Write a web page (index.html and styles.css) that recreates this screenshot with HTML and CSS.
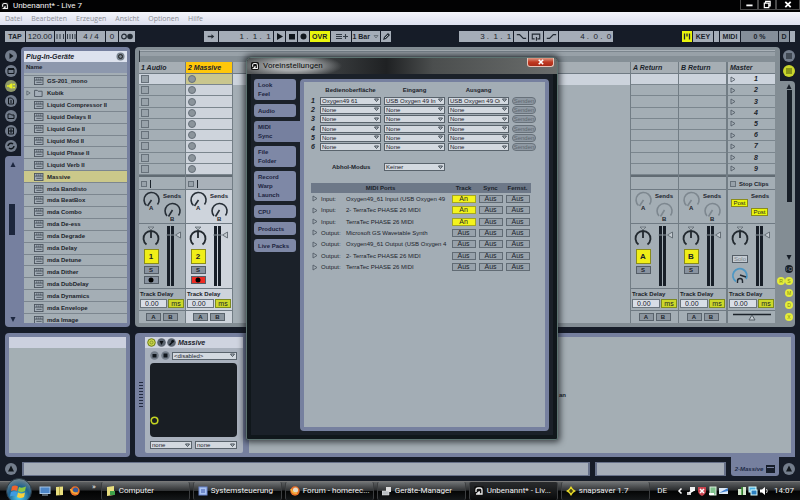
FILE: index.html
```html
<!DOCTYPE html>
<html lang="de">
<head>
<meta charset="utf-8">
<title>Unbenannt* - Live 7</title>
<link rel="stylesheet" href="styles.css">
</head>
<body>
<svg class="defs" aria-hidden="true">
  <symbol id="live" viewBox="0 0 10 10"><rect width="10" height="10" rx="2" fill="#111"/><path d="M2 6V4Q2 2 4 2h2q2 0 2 2v4H5V6h1M2 8h2V6" fill="none" stroke="#eee" stroke-width="1.3"/></symbol>
  <symbol id="plug" viewBox="0 0 11 9"><rect x=".5" y=".5" width="9.5" height="8" fill="#a4aeb8" stroke="#4b545e"/><path d="M1 3.5h9M3 3.5v-2M5.3 3.5v-2M7.5 3.5v-2M2.5 6h6" stroke="#4b545e" fill="none"/></symbol>
  <symbol id="folder" viewBox="0 0 11 9"><path d="M.5 1.5h3l1 1H9v6H.5z" fill="#a4aeb8" stroke="#4b545e"/></symbol>
  <symbol id="tri" viewBox="0 0 6 7"><path d="M1 1l4 2.5L1 6z" fill="none" stroke="#555f69" stroke-width=".9"/></symbol>
  <symbol id="sends" viewBox="0 0 46 33">
    <g fill="none" stroke="currentColor" stroke-width="1.6">
      <path d="M7.5 15.5A7.5 7.5 0 1 1 18.5 14.5M12.5 10L8.5 16"/>
      <path d="M28 26A7.5 7.5 0 1 1 39.500 25.500M33.500 20L29.500 26.500"/>
    </g>
  </symbol>
  <symbol id="pan" viewBox="0 0 18 22"><path d="M4.500 18.500A7.500 7.500 0 1 1 13.500 18.500M9 12V4.500" fill="none" stroke="#22292f" stroke-width="1.800"/><path d="M6 1h6L9 4z" fill="#aab3b8" stroke="#59636b" stroke-width=".7"/></symbol>
  <symbol id="meter" viewBox="0 0 16 60"><path d="M1 0h3v60H1zM5 0h3v60H5z" fill="#171e27"/><path d="M0 9h9" stroke="#8a949c"/><path d="M9.500 9l5-3v6z" fill="#c3cad0" stroke="#535d65" stroke-width=".8"/></symbol>
</svg>

<header class="titlebar">
  <svg class="ico8"><use href="#live"/></svg><span>Unbenannt* - Live 7</span>
  <div class="winbtns">
    <button aria-label="Minimieren"><svg viewBox="0 0 18 10"><path d="M6 6h7" stroke="#fff" stroke-width="2"/></svg></button>
    <button aria-label="Wiederherstellen"><svg viewBox="0 0 14 10"><path d="M5.500 3V1.500h5v5H9M4 3.500h5v5H4z" fill="none" stroke="#fff" stroke-width="1.300"/></svg></button>
    <button aria-label="Schließen" class="wide"><svg viewBox="0 0 24 10"><path d="M9 2l6 6M15 2L9 8" stroke="#fff" stroke-width="2"/></svg></button>
  </div>
</header>
<nav class="menubar"><a href="#">Datei</a><a href="#">Bearbeiten</a><a href="#">Erzeugen</a><a href="#">Ansicht</a><a href="#">Optionen</a><a href="#">Hilfe</a></nav>

<main class="live">
  <div class="transport">
    <div class="group">
      <button class="w20">TAP</button><button class="w27 num">120.00</button>
      <button class="w10" aria-label="Langsamer"><svg viewBox="0 0 10 11"><path d="M2 3v5M5 3v5M8.500 3v5" stroke="#333c46"/></svg></button>
      <button class="w10" aria-label="Schneller"><svg viewBox="0 0 10 11"><path d="M1.500 3v5M4 3v5M6.500 3v5M9 3v5" stroke="#333c46"/></svg></button>
      <button class="w27 num">4 / 4</button><button class="w12 num">0</button>
      <button class="w16" aria-label="Metronom"><svg viewBox="0 0 16 11"><circle cx="5" cy="5.500" r="2.300" fill="none" stroke="#222a33" stroke-width="1.200"/><circle cx="11" cy="5.500" r="2.800" fill="#222a33"/></svg></button>
    </div>
    <div class="group">
      <button class="w15" aria-label="Folgen"><svg viewBox="0 0 15 11"><path d="M4 5.500h5" stroke="#222a33" stroke-width="1.500"/><path d="M8 3l3 2.500L8 8z" fill="#222a33"/></svg></button>
      <button class="w54 num right">1 .&nbsp; 1 .&nbsp; 1</button>
      <button class="w11" aria-label="Start"><svg viewBox="0 0 11 11"><path d="M3 2l6 3.500L3 9z" fill="#10161c"/></svg></button>
      <button class="w11" aria-label="Stopp"><svg viewBox="0 0 11 11"><path d="M3 3h6v5.500H3z" fill="#10161c"/></svg></button>
      <button class="w11" aria-label="Aufnahme"><svg viewBox="0 0 11 11"><circle cx="5.500" cy="5.500" r="3" fill="#10161c"/></svg></button>
      <button class="w20 on">OVR</button>
      <button class="w20" aria-label="Arrangement"><svg viewBox="0 0 20 11"><path d="M5 3.500h6M5 5.500h6M5 7.500h6M12 5.500h5M14.500 3v5" stroke="#333c46" stroke-width="1.100"/></svg></button>
      <button class="w27">1 Bar <svg viewBox="0 0 6 5" class="caret"><path d="M1 1.500h4L3 4z" fill="none" stroke="#6b747d"/></svg></button>
      <button class="w10" aria-label="Stift"><svg viewBox="0 0 10 11"><path d="M2 9l1-3 4-4 2 2-4 4z" fill="#222a33"/><path d="M4 7l3-3" stroke="#aab3bd"/></svg></button>
    </div>
    <div class="group">
      <button class="w54 num right">3 .&nbsp; 1 .&nbsp; 1</button>
      <button class="w15" aria-label="Punch-In"><svg viewBox="0 0 15 11"><path d="M3 3.500h3l4 4h3" fill="none" stroke="#222a33" stroke-width="1.300"/></svg></button>
      <button class="w15" aria-label="Loop"><svg viewBox="0 0 15 11"><path d="M6 8H3.500V3h8v5H9M8 6v4" fill="none" stroke="#222a33" stroke-width="1.200"/></svg></button>
      <button class="w15" aria-label="Punch-Out"><svg viewBox="0 0 15 11"><path d="M3 7.500h3l4-4h3" fill="none" stroke="#222a33" stroke-width="1.300"/></svg></button>
      <button class="w54 num right">4 .&nbsp; 0 .&nbsp; 0</button>
    </div>
    <div class="group">
      <button class="w10 on" aria-label="Tastatur"><svg viewBox="0 0 10 11"><path d="M2.500 2.500v6M5 2.500v3M7.500 2.500v6" stroke="#222a33" stroke-width="1.300"/></svg></button>
      <button class="w20">KEY</button><button class="w5" aria-label="Key-Anzeige"></button><button class="w20">MIDI</button><button class="w37 load">0 %</button><button class="w10 load">D</button><button class="w5" aria-label="MIDI-Anzeige"></button>
    </div>
  </div>

  <div class="upper">
    <aside class="browser">
      <div class="rail">
        <button aria-label="Live-Geräte"><svg viewBox="0 0 12 12"><path d="M4.500 3l4 3-4 3z" fill="#10161c"/></svg></button>
        <button aria-label="Bibliothek"><svg viewBox="0 0 12 12"><path d="M3 4h6v4.500H3z" fill="none" stroke="#10161c"/><path d="M3 4h6" stroke="#10161c" stroke-width="2"/></svg></button>
        <button class="lit" aria-label="Plug-ins"><svg viewBox="0 0 12 12"><path d="M2 6h3M8 4.500h2M8 7.500h2" stroke="#e8f020" stroke-width="1.300"/><path d="M7.500 3.500v5H6Q4 8 4 6t2-2.500z" fill="#e8f020"/></svg></button>
        <button aria-label="Datei 1"><svg viewBox="0 0 12 12"><path d="M3.500 3h3l2 2v4h-5zM6 5v3" fill="none" stroke="#10161c"/></svg></button>
        <button aria-label="Datei 2"><svg viewBox="0 0 12 12"><path d="M3 4h2.500l1 1H9v3.500H3z" fill="none" stroke="#10161c"/></svg></button>
        <button aria-label="Datei 3"><svg viewBox="0 0 12 12"><path d="M3.500 3h5v6h-5zM5 5h2v2H5z" fill="none" stroke="#10161c"/></svg></button>
        <button aria-label="Hot-Swap"><svg viewBox="0 0 12 12"><path d="M3 6a3 3 0 0 1 5-2M9 6a3 3 0 0 1-5 2" fill="none" stroke="#10161c" stroke-width="1.500"/></svg></button>
        <div class="scroller"><svg viewBox="0 0 8 7"><path d="M4 1l2.500 5h-5z" fill="#1d2740"/></svg><i></i><svg viewBox="0 0 8 7"><path d="M4 6L1.500 1h5z" fill="#1d2740"/></svg></div>
      </div>
      <div class="browser-box">
        <div class="browser-head"><span>Plug-In-Geräte</span><svg class="ico9" viewBox="0 0 9 9"><circle cx="4.500" cy="4.500" r="4" fill="#76808c"/><circle cx="4.500" cy="4.500" r="2" fill="none" stroke="#222"/></svg></div>
        <div class="browser-name">Name</div>
        <div class="list-clip"><ul class="list">
          <li></li>
          <li><i></i><svg><use href="#plug"/></svg>GS-201_mono</li>
          <li><i><svg class="t"><use href="#tri"/></svg></i><svg><use href="#folder"/></svg>Kubik</li>
          <li><i></i><svg><use href="#plug"/></svg>Liquid Compressor II</li>
          <li><i></i><svg><use href="#plug"/></svg>Liquid Delays II</li>
          <li><i></i><svg><use href="#plug"/></svg>Liquid Gate II</li>
          <li><i></i><svg><use href="#plug"/></svg>Liquid Mod II</li>
          <li><i></i><svg><use href="#plug"/></svg>Liquid Phase II</li>
          <li><i></i><svg><use href="#plug"/></svg>Liquid Verb II</li>
          <li class="sel"><i></i><svg><use href="#plug"/></svg>Massive</li>
          <li><i></i><svg><use href="#plug"/></svg>mda Bandisto</li>
          <li><i></i><svg><use href="#plug"/></svg>mda BeatBox</li>
          <li><i></i><svg><use href="#plug"/></svg>mda Combo</li>
          <li><i></i><svg><use href="#plug"/></svg>mda De-ess</li>
          <li><i></i><svg><use href="#plug"/></svg>mda Degrade</li>
          <li><i></i><svg><use href="#plug"/></svg>mda Delay</li>
          <li><i></i><svg><use href="#plug"/></svg>mda Detune</li>
          <li><i></i><svg><use href="#plug"/></svg>mda Dither</li>
          <li><i></i><svg><use href="#plug"/></svg>mda DubDelay</li>
          <li><i></i><svg><use href="#plug"/></svg>mda Dynamics</li>
          <li><i></i><svg><use href="#plug"/></svg>mda Envelope</li>
          <li><i></i><svg><use href="#plug"/></svg>mda Image</li>
        </ul></div>
      </div>
    </aside>

    <section class="session">
      <div class="tracks-wrap">
        <div class="scrub"></div>
        <div class="tracks">
          <div class="track">
            <h3>1 Audio</h3>
            <div class="clips slots"><i></i><i></i><i></i><i></i><i></i><i></i><i></i><i></i><i></i></div>
            <div class="stop"><b></b><s></s></div>
            <svg class="sends"><use href="#sends"/><text x="10" y="20">A</text><text x="31" y="31">B</text><text x="24" y="8">Sends</text></svg>
            <div class="mixer"><div class="col"><svg class="pan"><use href="#pan"/></svg><button class="act">1</button><button class="sm">S</button><button class="sm" aria-label="Aufnahme 1"><svg viewBox="0 0 6 6"><circle cx="3" cy="3" r="2.500"/></svg></button></div><svg class="meter"><use href="#meter"/></svg></div>
            <div class="delay"><label for="d1">Track Delay</label><div><input id="d1" value="0.00"><button>ms</button></div></div>
            <div class="ab"><button>A</button><button>B</button></div>
          </div>
          <div class="track active">
            <h3>2 Massive</h3>
            <div class="clips slots circles"><i></i><i></i><i></i><i></i><i></i><i></i><i></i><i></i><i></i></div>
            <div class="stop"><b></b><s></s></div>
            <svg class="sends"><use href="#sends"/><text x="10" y="20">A</text><text x="31" y="31">B</text><text x="24" y="8">Sends</text></svg>
            <div class="mixer"><div class="col"><svg class="pan"><use href="#pan"/></svg><button class="act">2</button><button class="sm">S</button><button class="sm armed" aria-label="Aufnahme 2"><svg viewBox="0 0 6 6"><circle cx="3" cy="3" r="2.500"/></svg></button></div><svg class="meter"><use href="#meter"/></svg></div>
            <div class="delay"><label for="d2">Track Delay</label><div><input id="d2" value="0.00"><button>ms</button></div></div>
            <div class="ab"><button>A</button><button>B</button></div>
          </div>
          <div class="empty"><h3></h3><div class="hl"></div></div>
          <div class="track ret">
            <h3>A Return</h3>
            <div class="clips"><i></i><i></i><i></i><i></i><i></i><i></i><i></i><i></i><i></i></div>
            <div class="stop"></div>
            <svg class="sends"><use href="#sends"/><text x="10" y="20">A</text><text x="31" y="31">B</text><text x="24" y="8">Sends</text></svg>
            <div class="mixer"><div class="col"><svg class="pan"><use href="#pan"/></svg><button class="act">A</button><button class="sm">S</button></div><svg class="meter"><use href="#meter"/></svg></div>
            <div class="delay"><label for="d3">Track Delay</label><div><input id="d3" value="0.00"><button>ms</button></div></div>
            <div class="ab"><button>A</button><button>B</button></div>
          </div>
          <div class="track ret">
            <h3>B Return</h3>
            <div class="clips"><i></i><i></i><i></i><i></i><i></i><i></i><i></i><i></i><i></i></div>
            <div class="stop"></div>
            <svg class="sends"><use href="#sends"/><text x="10" y="20">A</text><text x="31" y="31">B</text><text x="24" y="8">Sends</text></svg>
            <div class="mixer"><div class="col"><svg class="pan"><use href="#pan"/></svg><button class="act">B</button><button class="sm">S</button></div><svg class="meter"><use href="#meter"/></svg></div>
            <div class="delay"><label for="d4">Track Delay</label><div><input id="d4" value="0.00"><button>ms</button></div></div>
            <div class="ab"><button>A</button><button>B</button></div>
          </div>
          <div class="track master">
            <h3>Master</h3>
            <div class="clips scenes"><span><svg><use href="#tri"/></svg>1</span><span><svg><use href="#tri"/></svg>2</span><span><svg><use href="#tri"/></svg>3</span><span><svg><use href="#tri"/></svg>4</span><span><svg><use href="#tri"/></svg>5</span><span><svg><use href="#tri"/></svg>6</span><span><svg><use href="#tri"/></svg>7</span><span><svg><use href="#tri"/></svg>8</span><span><svg><use href="#tri"/></svg>9</span></div>
            <div class="stop"><b></b>Stop Clips</div>
            <div class="posts"><span>Sends</span><button>Post</button><button>Post</button></div>
            <div class="mixer"><div class="col"><svg class="pan"><use href="#pan"/></svg><button class="sm solo">Solo</button><svg class="cue" viewBox="0 0 18 20"><path d="M5 15.500A7 7 0 1 1 15 13" fill="none" stroke="#4d97c4" stroke-width="1.800"/><path d="M9 9l6 2" stroke="#222a33" stroke-width="1.600"/><path d="M6.500 17v-2a2.500 2.500 0 0 1 5 0v2" fill="none" stroke="#222a33" stroke-width="1.400"/></svg></div><svg class="meter"><use href="#meter"/></svg></div>
            <div class="delay"><label for="d5">Track Delay</label><div><input id="d5" value="0.00"><button>ms</button></div></div>
            <div class="ab"><svg viewBox="0 0 40 9"><path d="M1 1.500h38" stroke="#1b222a" stroke-width="1.500"/><path d="M20 2l3 5h-6z" fill="#c3cad0" stroke="#535d65"/></svg></div>
          </div>
        </div>
      </div>
      <div class="rail-right">
        <button aria-label="Arrangement-Ansicht"><svg viewBox="0 0 12 12"><path d="M3 4h6M3 6h6M3 8h6" stroke="#10161c" stroke-width="1.200"/></svg></button>
        <button class="lime" aria-label="Session-Ansicht"><svg viewBox="0 0 12 12"><path d="M4 3v6M6 3v6M8 3v6" stroke="#5d6a10" stroke-width="1.200"/></svg></button>
        <div class="rr-body">
          <svg viewBox="0 0 8 7"><path d="M4 1l2.500 5h-5z" fill="#171e27"/></svg><i></i><svg class="down" viewBox="0 0 8 7"><path d="M4 6L1.500 1h5z" fill="#171e27"/></svg>
          <div class="dots"><button class="io">I·O</button><div><button>R</button><button>S</button></div><button>M</button><button>D</button><button>X</button></div>
        </div>
      </div>
    </section>
  </div>

  <div class="lower">
    <div class="info"><div></div></div>
    <div class="detail">
      <div class="grip"></div>
      <section class="device">
        <h4><svg viewBox="0 0 9 9"><circle cx="4.500" cy="4.500" r="3.800" fill="#c9d64a" stroke="#6d7a1a"/><circle cx="4.500" cy="4.500" r="1.500" fill="none" stroke="#8a962a"/></svg><svg viewBox="0 0 9 9"><circle cx="4.500" cy="4.500" r="4.300" fill="#59626e"/><path d="M2.500 3h4l-2 4z" fill="#0c1116"/></svg><svg viewBox="0 0 9 9"><circle cx="4.500" cy="4.500" r="4.300" fill="#59626e"/><path d="M2.500 7l3-3" stroke="#0c1116" stroke-width="1.500"/><circle cx="5.700" cy="3.300" r="1.400" fill="#0c1116"/></svg>Massive</h4>
        <div class="drow"><svg viewBox="0 0 9 9"><circle cx="4.500" cy="4.500" r="4.300" fill="#737d89"/><path d="M2.500 3h4v3.500h-4z" fill="#10161c"/></svg><svg viewBox="0 0 9 9"><circle cx="4.500" cy="4.500" r="4.300" fill="#737d89"/><path d="M2.500 2.500h4v4h-4z" fill="#10161c"/></svg><select aria-label="Preset"><option>&lt;disabled&gt;</option></select></div>
        <div class="pad"><svg viewBox="0 0 9 9"><circle cx="4.500" cy="4.500" r="3.300" fill="none" stroke="#c3d422" stroke-width="1.600"/></svg></div>
        <div class="drow two"><select aria-label="X"><option>none</option></select><select aria-label="Y"><option>none</option></select></div>
      </section>
      <div class="drop"><span>an</span></div>
    </div>
  </div>

  <footer class="status">
    <button class="round" aria-label="Info"><svg viewBox="0 0 12 12"><path d="M6 2.500L9 8.500H3z" fill="#10161c"/></svg></button>
    <div class="bar grow"></div><div class="bar b2"></div>
    <div class="chain">2-Massive <svg viewBox="0 0 9 8"><path d="M0 0h9v8H0z" fill="#171e2b"/><path d="M1 2.500h7" stroke="#76809f"/></svg></div>
    <button class="round" aria-label="Detail"><svg viewBox="0 0 12 12"><path d="M6 2.500L9 8.500H3z" fill="#10161c"/></svg></button>
  </footer>
</main>

<section class="dialog" role="dialog" aria-label="Voreinstellungen">
  <header><svg class="ico8"><use href="#live"/></svg><span>Voreinstellungen</span><button aria-label="Schließen"><svg viewBox="0 0 26 9"><path d="M11 2l5 5M16 2l-5 5" stroke="#fff" stroke-width="1.800"/></svg></button></header>
  <div class="client">
    <nav class="tabs"><button>Look<br>Feel</button><button>Audio</button><button class="current">MIDI<br>Sync</button><button>File<br>Folder</button><button>Record<br>Warp<br>Launch</button><button>CPU</button><button>Products</button><button>Live Packs</button></nav>
    <div class="pane">
      <div class="surf-head"><span></span><span>Bedienoberfläche</span><span>Eingang</span><span>Ausgang</span></div>
      <div class="surfaces">
        <b>1</b><select aria-label="Bedienoberfläche 1"><option>Oxygen49 61</option></select><select aria-label="Eingang 1"><option>USB Oxygen 49 In</option></select><select aria-label="Ausgang 1"><option>USB Oxygen 49 Out</option></select><button>Senden</button>
        <b>2</b><select aria-label="Bedienoberfläche 2"><option>None</option></select><select aria-label="Eingang 2"><option>None</option></select><select aria-label="Ausgang 2"><option>None</option></select><button>Senden</button>
        <b>3</b><select aria-label="Bedienoberfläche 3"><option>None</option></select><select aria-label="Eingang 3"><option>None</option></select><select aria-label="Ausgang 3"><option>None</option></select><button>Senden</button>
        <b>4</b><select aria-label="Bedienoberfläche 4"><option>None</option></select><select aria-label="Eingang 4"><option>None</option></select><select aria-label="Ausgang 4"><option>None</option></select><button>Senden</button>
        <b>5</b><select aria-label="Bedienoberfläche 5"><option>None</option></select><select aria-label="Eingang 5"><option>None</option></select><select aria-label="Ausgang 5"><option>None</option></select><button>Senden</button>
        <b>6</b><select aria-label="Bedienoberfläche 6"><option>None</option></select><select aria-label="Eingang 6"><option>None</option></select><select aria-label="Ausgang 6"><option>None</option></select><button>Senden</button>
      </div>
      <div class="mode"><label for="mode">Abhol-Modus</label><select id="mode"><option>Keiner</option></select></div>
      <table>
        <colgroup><col class="c1"><col class="c2"><col><col class="c4"><col class="c4"><col class="c4"></colgroup>
        <thead><tr><th colspan="3">MIDI Ports</th><th>Track</th><th>Sync</th><th>Fernst.</th></tr></thead>
        <tbody>
          <tr><td><svg><use href="#tri"/></svg></td><td>Input:</td><td>Oxygen49_61 Input (USB Oxygen 49</td><td><button class="on">An</button></td><td><button>Aus</button></td><td><button>Aus</button></td></tr>
          <tr><td><svg><use href="#tri"/></svg></td><td>Input:</td><td>2- TerraTec PHASE 26 MIDI</td><td><button class="on">An</button></td><td><button>Aus</button></td><td><button>Aus</button></td></tr>
          <tr><td><svg><use href="#tri"/></svg></td><td>Input:</td><td>TerraTec PHASE 26 MIDI</td><td><button class="on">An</button></td><td><button>Aus</button></td><td><button>Aus</button></td></tr>
          <tr><td><svg><use href="#tri"/></svg></td><td>Output:</td><td>Microsoft GS Wavetable Synth</td><td><button>Aus</button></td><td><button>Aus</button></td><td><button>Aus</button></td></tr>
          <tr><td><svg><use href="#tri"/></svg></td><td>Output:</td><td>Oxygen49_61 Output (USB Oxygen 4</td><td><button>Aus</button></td><td><button>Aus</button></td><td><button>Aus</button></td></tr>
          <tr><td><svg><use href="#tri"/></svg></td><td>Output:</td><td>2- TerraTec PHASE 26 MIDI</td><td><button>Aus</button></td><td><button>Aus</button></td><td><button>Aus</button></td></tr>
          <tr><td><svg><use href="#tri"/></svg></td><td>Output:</td><td>TerraTec PHASE 26 MIDI</td><td><button>Aus</button></td><td><button>Aus</button></td><td><button>Aus</button></td></tr>
        </tbody>
      </table>
    </div>
  </div>
</section>

<footer class="taskbar">
  <button class="orb" aria-label="Start"><svg viewBox="0 0 26 26"><defs><radialGradient id="og" cx=".5" cy=".75" r=".7"><stop offset="0" stop-color="#4fd0f0"/><stop offset=".6" stop-color="#1d5f8c"/><stop offset="1" stop-color="#6d8592"/></radialGradient></defs><circle cx="13" cy="13" r="12.500" fill="url(#og)" stroke="#2d3b45"/><path d="M6 8.500q3-2 6 0l-1 4.500q-3-1.500-6 0z" fill="#f0642c"/><path d="M13 9q3 1.500 7-.5l-1 4.500q-3.500 2-7 0z" fill="#8fc843"/><path d="M5 14q3-1.500 6 0l-1 4.500q-3-1.500-6 0z" fill="#3f9be0"/><path d="M12 14.500q3.500 2 7 0l-1 4.500q-3.500 2-7 0z" fill="#f8cf3c"/></svg></button>
  <div class="quick">
    <svg viewBox="0 0 12 10"><rect x="1" y="1" width="10" height="6.500" fill="#4d86c8" stroke="#a8c6e6"/><path d="M3 9h6" stroke="#9fb3c6"/></svg>
    <svg viewBox="0 0 12 10"><path d="M2 1l7-.5V9L2 9.500z" fill="#e9df7f"/><path d="M5.500 1v8" stroke="#b5a540"/></svg>
    <svg viewBox="0 0 12 10"><circle cx="6" cy="5" r="4.700" fill="#e8702a"/><circle cx="6.500" cy="4" r="2.600" fill="#355c9c"/><path d="M1.500 3q2 5 7 4" stroke="#f7b23a" stroke-width="1.500" fill="none"/></svg>
    <span>»</span>
  </div>
  <div class="tasks">
    <button><svg viewBox="0 0 10 10"><path d="M1 1l7-1v9l-7 1z" fill="#e9df7f"/><path d="M4 5h5v4H4z" fill="#3fa04a"/></svg>Computer</button>
    <button><svg viewBox="0 0 10 10"><rect x="1" y="1" width="8" height="8" fill="#a9c2f0" stroke="#6b86d0"/><path d="M3 4h4M3 6h4" stroke="#3a55a8"/></svg>Systemsteuerung</button>
    <button><svg viewBox="0 0 10 10"><circle cx="5" cy="5" r="4.700" fill="#e8702a"/><circle cx="5.500" cy="4" r="2.600" fill="#e4dcc8"/><path d="M1 3q1.500 5 6 4" stroke="#f7b23a" stroke-width="1.500" fill="none"/></svg>Forum - homerec...</button>
    <button><svg viewBox="0 0 10 10"><path d="M4 1h5v5H4z" fill="#ddd"/><path d="M0 5h7v4H0z" fill="#b8bcc0" stroke="#eee" stroke-width=".5"/></svg>Geräte-Manager</button>
    <button class="pressed"><svg><use href="#live"/></svg>Unbenannt* - Liv...</button>
    <button><svg viewBox="0 0 10 10"><path d="M5 0l2 3 3 2-3 2-2 3-2-3-3-2 3-2z" fill="#e6d92a"/><path d="M5 3v4M3 5h4" stroke="#1d1d10" stroke-width="1.200"/></svg>snapsaver 1.7</button>
  </div>
  <div class="tray">
    <span class="lang">DE</span><svg class="chev" viewBox="0 0 10 10"><path d="M6.500 2.500L4 5l2.500 2.500" fill="none" stroke="#fff" stroke-width="1.500"/></svg>
    <svg viewBox="0 0 10 10"><path d="M4 1h5v4H4z" fill="#eee"/><path d="M1 6h4v3H1z" fill="#ccc"/><path d="M3 7l5-3" stroke="#fff" stroke-width="1.500"/></svg>
    <svg viewBox="0 0 10 10"><path d="M1 1h8v4q0 3-4 5-4-2-4-5z" fill="#c9434e"/><path d="M3 3l4 4M7 3L3 7" stroke="#fff" stroke-width="1.500"/></svg>
    <svg viewBox="0 0 10 10"><rect x="2" y="1" width="6" height="8" fill="#7fc08c" stroke="#d5ecd8"/><path d="M1 8h5" stroke="#fff" stroke-width="2"/></svg>
    <svg viewBox="0 0 10 10"><path d="M0 2h9v6H0z" fill="#dce8f5"/><path d="M0 7l9-5v3z" fill="#3e7fd0"/></svg>
    <i></i>
    <svg viewBox="0 0 10 10"><path d="M1 3h4v6H1zM6 1h3v8H6z" fill="#d8e8d0"/><path d="M5 1v8" stroke="#3f9a3a" stroke-width="1.500"/></svg>
    <svg viewBox="0 0 10 10"><rect x="1" y="1" width="7" height="5" fill="#4cb0e0" stroke="#dff"/><rect x="3" y="4" width="6" height="5" fill="#2b7fc0" stroke="#dff"/></svg>
    <svg viewBox="0 0 10 10"><path d="M1 3.500h2L6 1v8L3 6.500H1z" fill="#fff"/><path d="M7.500 3q1.500 2 0 4" fill="none" stroke="#ddd"/></svg>
    <time>14:07</time>
  </div>
</footer>
</body>
</html>
```

FILE: styles.css
```css
* { box-sizing: border-box; margin: 0; padding: 0; }
:root {
  --dark: #161c28;
  --grey: #a4aeb5;
  --blue: #76809f;
  --frame: #838d94;
  --line: #6f7a83;
  --lime: #e9f50c;
}
html, body { height: 100%; }
body {
  display: flex; flex-direction: column; position: relative; overflow: hidden;
  font: 6px/8px "Liberation Sans", Arial, sans-serif; color: #1b232b; background: var(--dark);
}
svg { display: block; flex: none; }
.defs { display: none; }
button, input, select { font: inherit; color: inherit; border: 0; border-radius: 0; background: none; }
button { display: flex; align-items: center; justify-content: center; cursor: pointer; white-space: nowrap; }
select {
  appearance: none; min-width: 0; height: 8px; border: 1px solid #59636c; padding: 0 8px 0 1px;
  line-height: 6px; overflow: hidden;
  background: #d3d9e0 url("data:image/svg+xml,%3Csvg xmlns='http://www.w3.org/2000/svg' width='7' height='5'%3E%3Cpath d='M1.500 1h4L3.500 3.500z' fill='none' stroke='%23414b54'/%3E%3C/svg%3E") no-repeat right center;
}
h3, h4 { font-size: 7px; font-weight: bold; font-style: italic; }
.ico8 { width: 8px; height: 8px; }
.ico9 { width: 9px; height: 9px; }

.titlebar { display: flex; align-items: center; gap: 4px; height: 12px; padding-left: 1px; background: #020203; color: #f2f2f2; font: 8px/10px Roboto, sans-serif; }
.winbtns { display: flex; margin-left: auto; height: 10px; align-self: flex-start; }
.winbtns button { width: 18px; border: 1px solid #4a4a4a; border-top: 0; }
.winbtns .wide { width: 24px; }
.winbtns button svg { height: 9px; width: 100%; }
.menubar { display: flex; align-items: center; gap: 9px; height: 13px; padding-left: 5px; background: linear-gradient(#f4f5fb, #dcdfee); font: 7px/10px "Open Sans", sans-serif; }
.menubar a { color: #8b8d94; text-decoration: none; }

.live { flex: 1; min-height: 0; display: flex; flex-direction: column; padding: 6px 5px 0; background: var(--dark); }
.transport { display: flex; justify-content: space-between; height: 11px; }
.group { display: flex; gap: 1px; }
.group button { height: 11px; background: #a5adb8; font-weight: bold; font-size: 7px; }
.group button svg { height: 11px; width: 100%; }
.group button .caret { width: 6px; height: 5px; margin-left: 3px; }
.group .num { font-size: 8px; font-weight: normal; }
.group .right { justify-content: flex-end; padding-right: 2px; }
.group .on { background: var(--lime); }
.group .load { background: #858e99; }
.w5 { width: 5px; } .w10 { width: 10px; } .w11 { width: 11px; } .w12 { width: 12px; }
.w15 { width: 14px; } .w16 { width: 16px; } .w20 { width: 20px; } .w27 { width: 28px; }
.w37 { width: 37px; } .w54 { width: 54px; }

.upper { flex: 1; min-height: 0; display: flex; gap: 5px; margin-top: 5px; }
.browser { display: flex; width: 125px; }
.rail { width: 16px; display: flex; flex-direction: column; }
.rail > button, .rail-right > button, .round { width: 12px; height: 12px; border-radius: 50%; background: #737d8c; }
.rail > button { margin: 3px 0 0; }
.rail button svg, .rail-right > button svg, .round svg { width: 12px; height: 12px; }
.rail .lit { background: #8e9868; }
.scroller { flex: 1; margin-top: 4px; padding: 5px 0 4px 4px; background: var(--blue); border-radius: 4px 0 0 4px; display: flex; flex-direction: column; }
.scroller svg { width: 8px; height: 7px; }
.scroller i { width: 6px; height: 31px; margin: 36px 0 auto; background: #1c263c; }
.browser-box { flex: 1; min-width: 0; display: flex; flex-direction: column; background: var(--blue); border-radius: 4px 4px 4px 0; padding: 4px 3px 4px; }
.browser-head { display: flex; align-items: center; justify-content: space-between; height: 11px; padding: 0 2px; background: #dde2ee; font-size: 7px; font-weight: bold; font-style: italic; }
.browser-name { height: 11px; line-height: 11px; padding-left: 2px; background: #8d98ad; font-weight: bold; }
.list-clip { flex: 1; min-height: 0; overflow: hidden; background: var(--grey); }
.list { display: grid; grid-template-rows: 3px repeat(21, 1fr); height: calc(100% + 3px); list-style: none; }
.list li { min-height: 0; display: flex; align-items: center; gap: 3px; border-bottom: 1px solid #7c868f; font-weight: bold; }
.list li > svg { width: 10px; height: 8px; }
.list li > i { width: 7px; padding-left: 2px; }
.list .t { width: 5px; height: 6px; }
.list .sel { background: #cbc88a; }

.session { flex: 1; min-width: 0; display: flex; }
.tracks-wrap { flex: 1; min-width: 0; background: var(--frame); border-radius: 4px 4px 0 4px; padding: 3px 5px 4px 4px; }
.scrub { height: 12px; border-top: 1px solid #a9b1b8; border-left: 1px solid #2d353d; background: linear-gradient(#7c868e 1px, #98a1a8 1px 5px, #858f96 5px); }
.tracks { display: flex; gap: 1px; background: #727d85; }
.track { width: 47px; flex: none; display: flex; flex-direction: column; background: var(--grey); }
.track:first-child, .track.active { width: 46px; }
.track h3, .empty h3 { height: 12px; line-height: 12px; padding-left: 2px; background: #a6aeb4; border-bottom: 1px solid var(--line); }
.clips { height: 102px; display: grid; grid-template-rows: repeat(9, 1fr); border-bottom: 1px solid #616b73; }
.clips > * { border-bottom: 1px solid #7b868e; display: flex; align-items: center; padding-left: 2px; }
.clips > :first-child { background: #ccd3dc; }
.slots i::before, .stop b { content: ""; width: 6px; height: 6px; border: 1px solid #67717a; background: #98a2aa; }
.circles i::before { border-radius: 50%; background: #8b949b; }
.stop { height: 14px; display: flex; align-items: center; gap: 3px; padding: 3px 2px 1px; border-bottom: 1px solid var(--line); border-top: 1px solid #616b73; font-weight: bold; white-space: nowrap; }
.stop s { width: 1px; height: 8px; background: #1b232b; }
.sends { width: 46px; height: 33px; color: #262e36; font-weight: bold; }
.sends text { fill: #1b232b; }
.ret .sends { color: #7d878f; }
.mixer { height: 66px; border-top: 1px solid var(--line); border-bottom: 1px solid var(--line); padding: 2px 2px 0 3px; display: flex; gap: 6px; }
.col { display: flex; flex-direction: column; align-items: center; width: 18px; }
.pan { width: 18px; height: 22px; }
.meter { width: 16px; height: 60px; }
.act { width: 15px; height: 15px; margin-top: 1px; background: #f0ee18; border: 1px solid #8a8c1a; font-weight: bold; font-size: 8px; }
.sm { width: 15px; height: 8px; margin-top: 2px; background: #8993a0; border: 1px solid #545d66; font-weight: bold; line-height: 6px; }
.sm svg { width: 6px; height: 6px; }
.armed { background: #ee2c24; }
.solo { width: 16px; background: #c4cbd2; color: #7b858d; font-weight: normal; margin: 7px 0 3px; }
.cue { width: 18px; height: 20px; }
.delay { height: 22px; padding: 1px 1px 0; font-weight: bold; border-bottom: 1px solid var(--line); }
.delay label { display: block; height: 9px; line-height: 9px; }
.delay div { display: flex; gap: 1px; }
.delay input { flex: 1; min-width: 0; height: 9px; padding-left: 4px; background: #d8dee6; border: 1px solid #6a747c; font-size: 7px; font-weight: normal; }
.delay button { width: 16px; height: 9px; background: #ccd82a; border: 1px solid #7d8a20; font-size: 7px; font-weight: normal; line-height: 7px; }
.ab { height: 12px; display: flex; justify-content: center; align-items: center; gap: 2px; }
.ab button { width: 15px; height: 8px; background: #8b959f; border: 1px solid #59636c; font-weight: bold; line-height: 6px; }
.ab svg { width: 40px; height: 9px; }
.active { background: #ced4dc; }
.active h3 { background: #ffc70a; }
.active .clips > :first-child { background: #c9c68e; }
.active .stop { background: #a9b1b9; }
.empty { flex: 1; min-width: 0; background: var(--grey); }
.empty .hl { height: 11px; background: #ccd3dc; }
.master { margin-left: 1px; }
.scenes svg { width: 6px; height: 7px; }
.scenes span { gap: 18px; font-size: 7px; font-weight: bold; font-style: italic; }
.posts { height: 33px; display: grid; grid-template-columns: 17px 17px; column-gap: 3px; padding: 2px 3px; grid-template-rows: 7px 9px 9px; font-weight: bold; }
.posts span { grid-column: 2; grid-row: 1; }
.posts button { height: 8px; background: var(--lime); border: 1px solid #8a8c1a; font-weight: normal; line-height: 6px; }
.posts button:nth-of-type(1) { grid-area: 2 / 1; }
.posts button:nth-of-type(2) { grid-area: 3 / 2; }

.rail-right { width: 15px; display: flex; flex-direction: column; align-items: flex-end; }
.rail-right > button { margin: 3px 0 0; }
.rail-right .lime { background: #c9d62c; }
.rr-body { flex: 1; width: 16px; margin-top: 4px; background: var(--frame); border-radius: 0 4px 4px 0; display: flex; flex-direction: column; align-items: flex-end; padding: 2px 2px 6px 0; }
.rr-body svg { width: 8px; height: 7px; }
.rr-body > i { width: 5px; height: 112px; margin-right: 1px; background: #171e27; }
.rr-body .down { margin-top: auto; }
.dots { display: flex; flex-direction: column; align-items: flex-end; gap: 4px; margin-top: 4px; }
.dots div { display: flex; }
.dots button { width: 8px; height: 8px; border-radius: 50%; background: #e4ec3a; color: #7e8a10; font-size: 5px; }
.dots .io { background: #1a2129; color: #98a2ab; }

.lower { display: flex; gap: 5px; height: 124px; margin-top: 6px; }
.info { width: 125px; padding: 4px; background: var(--blue); border-radius: 4px; }
.info div { height: 100%; background: linear-gradient(#ccd1df 11px, #a4afb4 11px); }
.detail { flex: 1; min-width: 0; display: flex; padding: 4px; gap: 6px; background: var(--blue); border-radius: 4px 4px 0 4px; }
.grip { width: 4px; height: 26px; margin: auto -6px auto 0; background: repeating-linear-gradient(#232b40 0 1px, transparent 1px 3px); }
.device { width: 98px; background: #a9b1bd; border-radius: 2px; margin-left: 2px; }
.device h4 { display: flex; align-items: center; gap: 1px; height: 11px; padding-left: 2px; background: #cfd4e0; }
.device h4 svg, .drow svg { width: 9px; height: 9px; }
.device h4 svg:last-of-type { margin-right: 1px; }
.drow { display: flex; gap: 2px; height: 15px; align-items: center; padding: 0 6px 0 5px; }
.drow select { flex: 1; }
.drow.two { height: 16px; gap: 3px; }
.pad { height: 74px; margin: 0 6px 0 5px; background: #191e24; border-radius: 4px; display: flex; align-items: flex-end; padding-bottom: 12px; }
.pad svg { width: 9px; height: 9px; }
.drop { flex: 1; min-width: 0; background: #a4aeb4; padding: 54px 0 0 310px; font-weight: bold; }

.status { display: flex; height: 24px; padding-bottom: 5px; align-items: flex-end; }
.round { margin-bottom: 1px; }
.bar { height: 14px; background: #a6aeb9; border: 1px solid #67718a; border-width: 1px 2px; }
.grow { flex: 1; margin-left: 5px; }
.b2 { width: 131px; margin: 0 5px; }
.chain { align-self: stretch; width: 48px; background: var(--blue); border-radius: 0 0 3px 3px; display: flex; gap: 3px; align-items: center; justify-content: center; padding-top: 5px; font-weight: bold; font-style: italic; white-space: nowrap; color: #222c48; }
.chain svg { width: 9px; height: 8px; }
.status .round:last-child { margin-left: 4px; }

.dialog { position: absolute; left: 246px; top: 57px; width: 312px; height: 383px; display: flex; flex-direction: column; padding: 0 4px 4px; background: #10171b; border: 1px solid #5c7370; border-radius: 5px 5px 2px 2px; box-shadow: 0 0 6px 2px rgba(8, 12, 16, .7); }
.dialog > header { display: flex; align-items: center; gap: 4px; height: 16px; margin: 0 -4px; padding: 0 3px 0 4px; border-radius: 4px 4px 0 0; background: radial-gradient(ellipse 50px 12px at 45px 8px, #a8abad 40%, transparent), linear-gradient(90deg, #55585a, #35383a 30%, #1f2123 45%, #4b4e4e 60%, #6a6d6c); color: #0c0c0c; font: 8px/10px Roboto, sans-serif; }
.dialog > header button { width: 27px; height: 9px; margin: 0 0 auto auto; background: linear-gradient(#df9a86, #c03a22 50%, #a82a18); border: 1px solid #e7c4b8; border-top: 0; border-radius: 0 0 3px 3px; }
.dialog > header button svg { width: 25px; height: 8px; }
.client { flex: 1; min-height: 0; display: flex; padding: 5px 4px 4px 3px; background: #1b2129; }
.tabs { width: 46px; display: flex; flex-direction: column; gap: 4px; }
.tabs button { width: 42px; min-height: 13px; padding: 2px 3px 1px 4px; justify-content: flex-start; text-align: left; line-height: 9px; font-weight: bold; color: #1c2440; background: #7e88a6; border-radius: 3px; }
.tabs .current { width: 46px; border-radius: 3px 0 0 3px; background: var(--blue); }
.pane { flex: 1; min-width: 0; border: 4px solid var(--blue); border-top-width: 3px; border-radius: 4px; background: #a3adb5; padding: 4px 9px 0 7px; }
.surf-head, .surfaces { display: grid; grid-template-columns: 6px 61px 61px 61px 24px; column-gap: 3px; }
.surf-head { height: 10px; font-weight: bold; text-align: center; white-space: nowrap; }
.surfaces { grid-template-rows: repeat(6, 1fr); height: 56px; align-items: center; }
.surfaces b { font-size: 7px; font-style: italic; }
.surfaces button { height: 8px; border: 1px solid #67717a; border-radius: 4px; background: #8f99a3; color: #5d6770; line-height: 6px; }
.mode { display: flex; align-items: center; margin-top: 10px; height: 10px; }
.mode label { width: 73px; padding-left: 21px; font-weight: bold; white-space: nowrap; }
.mode select { width: 61px; }
table { width: 220px; height: 90px; margin-top: 11px; border-collapse: collapse; table-layout: fixed; }
.c1 { width: 10px; } .c2 { width: 25px; } .c4 { width: 27px; }
thead tr { height: 10px; }
th { background: #6d7888; font-weight: bold; line-height: 9px; }
td { white-space: nowrap; vertical-align: middle; line-height: 8px; }
td svg { width: 6px; height: 7px; margin-left: 1px; }
td button { width: 24px; height: 8px; margin: 0 auto; background: #98a2ab; border: 1px solid #616b74; font-size: 7px; line-height: 6px; }
td .on { background: #f4f41c; border-color: #a4a620; }

.taskbar { display: flex; height: 19px; background: linear-gradient(#5d6062, #2a2c2e 45%, #020303 50%, #0c0d0e); font: 8px/10px Roboto, sans-serif; color: #f0f0f0; border-top: 1px solid #777; }
.orb { width: 26px; height: 26px; margin: -4px 0 0 6px; }
.orb svg { width: 26px; height: 26px; }
.quick { display: flex; gap: 3px; align-items: center; margin-left: 7px; }
.quick svg { width: 12px; height: 10px; }
.quick span { margin-left: 8px; align-self: flex-start; }
.tasks { display: flex; gap: 3px; margin-left: 5px; flex: 1; }
.tasks button { width: 89px; padding-left: 4px; gap: 3px; justify-content: flex-start; border: 1px solid #3c3e40; border-width: 0 1px; border-radius: 2px; background: linear-gradient(#6f7274, #303234 48%, #050606 52%, #15181a); }
.tasks svg { width: 10px; height: 10px; }
.tasks .pressed { background: linear-gradient(#2a2c2e, #08090a); }
.tray { display: flex; align-items: center; gap: 1px; padding-right: 6px; }
.tray svg { width: 10px; height: 10px; }
.tray .chev { margin-left: 7px; }
.tray i { width: 6px; }
.tray time { margin-left: 4px; }
```
